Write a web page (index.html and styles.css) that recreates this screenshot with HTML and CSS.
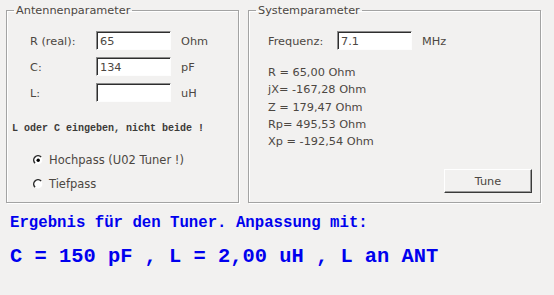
FILE: index.html
```html
<!DOCTYPE html>
<html>
<head>
<meta charset="utf-8">
<link rel="stylesheet" href="styles.css">
</head>
<body>
<div class="app">
  <div class="panels">
    <fieldset class="panel panel-left">
      <legend>Antennenparameter</legend>
      <div class="form">
        <div class="row"><span class="lbl">R (real):</span><span class="field">65</span><span class="unit">Ohm</span></div>
        <div class="row"><span class="lbl">C:</span><span class="field">134</span><span class="unit">pF</span></div>
        <div class="row"><span class="lbl">L:</span><span class="field"></span><span class="unit">uH</span></div>
      </div>
      <div class="note">L oder C eingeben, nicht beide !</div>
      <div class="radios">
        <div class="radio">
          <svg class="rb" width="10" height="10" viewBox="0 0 10 10"><circle cx="5" cy="5" r="4.4" fill="#fff"/><path d="M8.1 2 A4.3 4.3 0 0 0 2 8.1" fill="none" stroke="#2a2a2a" stroke-width="1.5"/><circle cx="5.2" cy="5.2" r="1.7" fill="#000"/></svg>
          <span>Hochpass (U02 Tuner !)</span>
        </div>
        <div class="radio">
          <svg class="rb" width="10" height="10" viewBox="0 0 10 10"><circle cx="5" cy="5" r="4.4" fill="#fff"/><path d="M8.1 2 A4.3 4.3 0 0 0 2 8.1" fill="none" stroke="#2a2a2a" stroke-width="1.5"/></svg>
          <span>Tiefpass</span>
        </div>
      </div>
    </fieldset>
    <fieldset class="panel panel-right">
      <legend>Systemparameter</legend>
      <div class="row freq"><span class="lbl">Frequenz:</span><span class="field">7.1</span><span class="unit">MHz</span></div>
      <div class="results">
        <div>R = 65,00 Ohm</div>
        <div>jX= -167,28 Ohm</div>
        <div>Z = 179,47 Ohm</div>
        <div>Rp= 495,53 Ohm</div>
        <div>Xp = -192,54 Ohm</div>
      </div>
      <div class="actions"><button class="btn">Tune</button></div>
    </fieldset>
  </div>
  <div class="result-title">Ergebnis für den Tuner. Anpassung mit:</div>
  <div class="result-value">C = 150 pF , L = 2,00 uH , L an ANT</div>
</div>
</body>
</html>
```
FILE: styles.css
```css
html, body {
  margin: 0;
  padding: 0;
  background: #f2f1f0;
}
body {
  font-family: "DejaVu Sans", sans-serif;
  font-size: 11.3px;
  color: #4c4742;
}
.app {
  padding: 4px 0 0 6px;
}
.panels {
  display: flex;
  gap: 9px;
}
.panel {
  box-sizing: border-box;
  margin: 0;
  padding: 0;
  height: 199px;
  border: 1px solid #a3a3a3;
  box-shadow: inset 1px 1px 0 #fff, 1px 1px 0 #fff;
  min-width: 0;
}
.panel-left { width: 233px; }
.panel-right { width: 293px; }
legend {
  margin-left: 7px;
  padding: 0 2px;
  line-height: 13px;
  font-size: 11.3px;
}
.form {
  padding: 14px 0 0 23px;
}
.row {
  display: flex;
  align-items: center;
  height: 19px;
  margin-bottom: 7px;
}
.lbl {
  width: 66px;
  padding-top: 1px;
}
.unit {
  padding-top: 1px;
  margin-left: 10px;
}
.field {
  box-sizing: border-box;
  width: 75px;
  height: 19px;
  background: #fff;
  border: 1px solid;
  border-color: #8c8c8c #fdfdfd #fdfdfd #8c8c8c;
  box-shadow: inset 1px 1px 0 #2e2e2e;
  padding: 2px 0 0 3px;
  line-height: 15px;
  color: #4c4742;
}
.note {
  margin-top: 21px;
  padding-left: 5px;
  font-family: "Liberation Mono", monospace;
  font-weight: bold;
  font-size: 10px;
  line-height: 12px;
  color: #3c3a38;
}
.radios {
  margin-top: 13px;
  padding-left: 26px;
}
.radio {
  display: flex;
  align-items: center;
  height: 24px;
  font-size: 11.5px;
}
.rb {
  margin-right: 6px;
  flex: none;
}
.freq {
  margin: 14px 0 0 19px;
}
.freq .lbl { width: 69px; }
.results {
  margin: 14px 0 0 19px;
  line-height: 17.25px;
}
.actions {
  display: flex;
  justify-content: flex-end;
  margin: 19px 8px 0 0;
}
.btn {
  box-sizing: border-box;
  width: 88px;
  height: 24px;
  margin: 0;
  padding: 0;
  background: #f2f1f0;
  border: 1px solid;
  border-color: #fff #3a3a3a #3a3a3a #fff;
  box-shadow: inset -1px -1px 0 #9a9a9a;
  font-family: "DejaVu Sans", sans-serif;
  font-size: 11.3px;
  color: #4c4742;
}
.result-title {
  margin: 10px 0 0 4px;
  font-family: "Liberation Mono", monospace;
  font-weight: bold;
  font-size: 15.7px;
  line-height: 20px;
  color: #0000ee;
}
.result-value {
  margin: 12px 0 0 4px;
  font-family: "Liberation Mono", monospace;
  font-weight: bold;
  font-size: 20.4px;
  line-height: 24px;
  color: #0000ee;
}
```
